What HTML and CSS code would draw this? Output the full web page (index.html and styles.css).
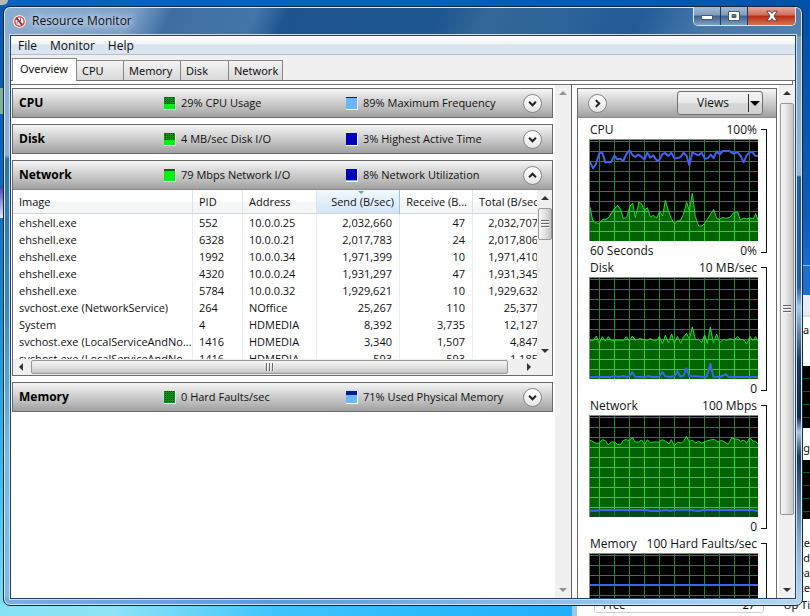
FILE: index.html
```html
<!DOCTYPE html>
<html lang="en">
<head>
<meta charset="utf-8">
<title>Resource Monitor</title>
<link rel="stylesheet" href="styles.css">
</head>
<body>
<svg class="defs" aria-hidden="true">
  <defs>
    <pattern id="grid" patternUnits="userSpaceOnUse" x="87" y="93" width="45" height="30">
      <rect width="45" height="30" fill="#000"/><path d="M0 1.5H45M1.5 0V30" stroke="#1c8a24" stroke-width="3"/>
    </pattern>
    <pattern id="grid-lit" patternUnits="userSpaceOnUse" x="87" y="93" width="45" height="30">
      <rect width="45" height="30" fill="#006400"/><path d="M0 1.5H45M1.5 0V30" stroke="#22d62e" stroke-width="3"/>
    </pattern>
  </defs>
</svg>
<div class="desktop">
  <div class="icon-bit bit-a"></div>
  <div class="icon-bit bit-b"></div>
  <div class="icon-bit bit-c"></div>
  <div class="back-window">
    <div class="back-title"></div>
    <div class="back-tabs">a</div>
    <div class="back-chart chart-a"></div>
    <div class="back-label">ag</div>
    <div class="back-chart chart-b"></div>
    <div class="back-stats"><span>te</span><span>d</span><span>ea</span><span>ce</span></div>
    <div class="back-foot"><span>Free</span><span>27</span></div>
    <div class="back-up">Up Ti</div>
  </div>

  <div class="window">
    <header class="titlebar">
      <svg class="app-icon" viewBox="0 0 16 16" aria-hidden="true">
        <circle cx="8" cy="8" r="7.3" fill="#f4f1f1" stroke="#a9a3a8"/>
        <circle cx="8" cy="8" r="4.9" fill="#fff" stroke="#c5383c" stroke-width="1.4"/>
        <path d="M4.5 4.2L10.8 11.6" stroke="#b01f24" stroke-width="2"/>
        <path d="M9 4.5v3M5.5 8v3" stroke="#555" stroke-width="1"/>
      </svg>
      <h1>Resource Monitor</h1>
      <div class="controls">
        <button type="button" aria-label="Minimize"><svg viewBox="0 0 14 12"><rect x="1.5" y="5.5" width="11" height="4" fill="#fff" stroke="#4a5a70"/></svg></button>
        <button type="button" aria-label="Maximize"><svg viewBox="0 0 14 12"><path d="M1.5 1.5h11v9h-11z M5 4.5v3h4v-3z" fill="#fff" fill-rule="evenodd" stroke="#4a5a70"/></svg></button>
        <button type="button" class="close" aria-label="Close"><svg viewBox="0 0 14 12"><path d="M1.8 1.2h3.4L7 3.5l1.8-2.3h3.4L9 6l3.2 4.8H8.8L7 8.5l-1.8 2.3H1.8L5 6z" fill="#fff" stroke="#5b3038" stroke-width=".9"/></svg></button>
      </div>
    </header>

    <div class="client">
      <nav class="menubar"><button type="button">File</button><button type="button">Monitor</button><button type="button">Help</button></nav>
      <div class="tabs" role="tablist">
        <button type="button" role="tab" aria-selected="true" class="tab tab-overview active">Overview</button>
        <button type="button" role="tab" class="tab tab-cpu">CPU</button>
        <button type="button" role="tab" class="tab tab-memory">Memory</button>
        <button type="button" role="tab" class="tab tab-disk">Disk</button>
        <button type="button" role="tab" class="tab tab-network">Network</button>
      </div>
      <div class="tab-edge"></div>

      <main class="panes">
        <div class="sections">
          <section class="section">
            <div class="bar">
              <h2>CPU</h2>
              <span class="stat"><i class="swatch green mid"></i>29% CPU Usage</span>
              <span class="stat"><i class="swatch sky"></i>89% Maximum Frequency</span>
              <button type="button" class="round" aria-label="Expand CPU"><svg viewBox="0 0 20 20"><path d="M6 8l4 4 4-4"/></svg></button>
            </div>
          </section>
          <section class="section">
            <div class="bar">
              <h2>Disk</h2>
              <span class="stat"><i class="swatch green mid"></i>4 MB/sec Disk I/O</span>
              <span class="stat"><i class="swatch navy"></i>3% Highest Active Time</span>
              <button type="button" class="round" aria-label="Expand Disk"><svg viewBox="0 0 20 20"><path d="M6 8l4 4 4-4"/></svg></button>
            </div>
          </section>
          <section class="section">
            <div class="bar">
              <h2>Network</h2>
              <span class="stat"><i class="swatch green high"></i>79 Mbps Network I/O</span>
              <span class="stat"><i class="swatch navy low"></i>8% Network Utilization</span>
              <button type="button" class="round" aria-label="Collapse Network"><svg viewBox="0 0 20 20"><path d="M6 12l4-4 4 4"/></svg></button>
            </div>
            <div class="list">
              <div class="viewport">
                <table>
                  <colgroup><col class="c-image"><col class="c-pid"><col class="c-address"><col class="c-send"><col class="c-receive"><col class="c-total"></colgroup>
                  <thead><tr><th>Image</th><th>PID</th><th>Address</th><th class="num sorted">Send (B/sec)</th><th class="num">Receive (B...</th><th class="total">Total (B/sec)</th></tr></thead>
                  <tbody>
                    <tr><td>ehshell.exe</td><td>552</td><td>10.0.0.25</td><td class="num">2,032,660</td><td class="num">47</td><td class="num">2,032,707</td></tr>
                    <tr><td>ehshell.exe</td><td>6328</td><td>10.0.0.21</td><td class="num">2,017,783</td><td class="num">24</td><td class="num">2,017,806</td></tr>
                    <tr><td>ehshell.exe</td><td>1992</td><td>10.0.0.34</td><td class="num">1,971,399</td><td class="num">10</td><td class="num">1,971,410</td></tr>
                    <tr><td>ehshell.exe</td><td>4320</td><td>10.0.0.24</td><td class="num">1,931,297</td><td class="num">47</td><td class="num">1,931,345</td></tr>
                    <tr><td>ehshell.exe</td><td>5784</td><td>10.0.0.32</td><td class="num">1,929,621</td><td class="num">10</td><td class="num">1,929,632</td></tr>
                    <tr><td>svchost.exe (NetworkService)</td><td>264</td><td>NOffice</td><td class="num">25,267</td><td class="num">110</td><td class="num">25,377</td></tr>
                    <tr><td>System</td><td>4</td><td>HDMEDIA</td><td class="num">8,392</td><td class="num">3,735</td><td class="num">12,127</td></tr>
                    <tr><td>svchost.exe (LocalServiceAndNo...</td><td>1416</td><td>HDMEDIA</td><td class="num">3,340</td><td class="num">1,507</td><td class="num">4,847</td></tr>
                    <tr><td>svchost.exe (LocalServiceAndNo...</td><td>1416</td><td>HDMEDIA</td><td class="num">593</td><td class="num">593</td><td class="num">1,185</td></tr>
                  </tbody>
                </table>
              </div>
              <div class="vscroll" aria-hidden="true"><i class="arrow up"></i><div class="thumb short"><i class="grip"></i></div><i class="arrow down"></i></div>
              <div class="hscroll" aria-hidden="true"><i class="arrow left"></i><div class="thumb"><i class="grip"></i></div><i class="arrow right"></i></div>
              <div class="corner"></div>
            </div>
          </section>
          <section class="section">
            <div class="bar">
              <h2>Memory</h2>
              <span class="stat"><i class="swatch green"></i>0 Hard Faults/sec</span>
              <span class="stat"><i class="swatch sky seventy"></i>71% Used Physical Memory</span>
              <button type="button" class="round" aria-label="Expand Memory"><svg viewBox="0 0 20 20"><path d="M6 8l4 4 4-4"/></svg></button>
            </div>
          </section>
        </div>
        <div class="vscroll gutter idle" aria-hidden="true"><i class="arrow up"></i><i class="arrow down"></i></div>

        <aside class="graphs">
          <div class="graph-panel">
            <div class="bar graph-bar">
              <button type="button" class="round" aria-label="Hide graphs"><svg viewBox="0 0 20 20"><path d="M8 6l4 4-4 4"/></svg></button>
              <button type="button" class="views"><span>Views</span><i class="arrow down"></i></button>
            </div>
            <figure class="graph">
              <figcaption><span>CPU</span><span>100%</span></figcaption>
              <svg class="plot" viewBox="60 60 504 303" aria-hidden="true">
                <rect x="60" y="60" width="504" height="303" fill="url(#grid)"/>
                <path class="area" d="M57 370V255L60 262 68 300 75 308 88 310 98 298 108 298 118 290 128 273 142 256 152 268 160 296 170 292 180 258 188 250 196 292 207 246 215 252 224 272 232 263 241 291 250 286 260 294 269 274 278 288 286 241 295 272 304 296 314 312 322 302 330 303 340 284 350 247 358 272 367 220 376 290 386 318 396 318 404 310 412 298 421 284 431 268 440 296 449 298 458 292 467 295 480 292 492 277 503 276 511 300 521 294 530 297 540 294 550 297 557 281 566 305V370Z"/>
                <path class="line" d="M58 123L62 130 69 145 78 132 88 99 97 99 106 127 123 127 133 106 142 118 151 116 160 123 169 102 178 91 187 104 195 111 205 104 214 110 223 119 232 98 241 113 250 106 260 121 268 120 277 102 286 99 295 108 304 98 313 115 322 115 332 111 341 98 350 108 358 136 367 97 376 102 386 106 395 98 404 116 413 115 422 104 431 114 440 94 449 104 458 93 478 93 490 101 503 97 512 108 521 127 530 106 540 97 548 97 556 108 566 107"/>
              </svg>
              <div class="foot"><span>60 Seconds</span><span>0%</span></div>
            </figure>
            <figure class="graph">
              <figcaption><span>Disk</span><span>10 MB/sec</span></figcaption>
              <svg class="plot" viewBox="60 60 504 303" aria-hidden="true">
                <rect x="60" y="60" width="504" height="303" fill="url(#grid)"/>
                <path class="area" d="M57 370V246L70 248 79 234 88 256 97 236 106 249 115 236 124 248 150 246 160 248 169 236 178 249 187 234 196 246 210 242 232 247 241 242 250 247 262 246 268 235 277 257 286 232 295 254 305 228 313 256 322 235 332 256 340 238 349 226 358 242 367 207 376 244 388 246 395 254 404 230 412 256 421 207 430 254 440 228 449 254 460 244 470 247 480 242 492 246 503 236 512 244 522 246 530 258 540 235 548 248 557 236 566 252V370Z"/>
                <path class="line" d="M57 357H122L134 354 145 357 160 354 170 357 179 355 187 342 195 356 225 357 235 354 245 357 268 357 277 342 286 355 300 357 314 355 322 339 331 356 341 353 349 331 358 354 375 355 410 357 421 318 430 356 450 357 467 349 476 357 566 357"/>
              </svg>
              <div class="foot"><span></span><span>0</span></div>
            </figure>
            <figure class="graph">
              <figcaption><span>Network</span><span>100 Mbps</span></figcaption>
              <svg class="plot" viewBox="60 60 504 303" aria-hidden="true">
                <rect x="60" y="60" width="504" height="303" fill="url(#grid)"/>
                <path class="area" d="M57 370V134L64 134 78 142 88 141 97 131 106 134 115 147 124 138 134 138 142 145 152 145 160 133 169 131 178 134 187 124 195 138 205 138 215 132 224 145 232 131 241 140 250 138 265 138 277 131 287 136 297 144 304 131 313 150 322 139 334 141 341 136 349 121 358 137 367 132 376 141 386 136 395 141 410 135 425 131 434 131 444 138 455 133 465 139 475 145 485 125 495 129 505 130 512 136 521 132 530 142 539 126 549 135 557 136 566 147V370Z"/>
                <rect class="haze" x="60" y="346" width="504" height="18"/>
                <path class="line" d="M57 344H80L90 342H230L240 344 265 345 285 342 300 344 320 341 355 341 385 345 400 342 545 342 566 345"/>
              </svg>
              <div class="foot"><span></span><span>0</span></div>
            </figure>
            <figure class="graph">
              <figcaption><span>Memory</span><span>100 Hard Faults/sec</span></figcaption>
              <svg class="plot" viewBox="60 60 504 303" aria-hidden="true">
                <rect x="60" y="60" width="504" height="303" fill="url(#grid)"/>
                <path class="line" d="M57 153H566"/>
              </svg>
              <div class="foot"><span></span><span>0</span></div>
            </figure>
          </div>
          <div class="vscroll gutter" aria-hidden="true"><i class="arrow up"></i><div class="thumb long"><i class="grip"></i></div><i class="arrow down"></i></div>
        </aside>
      </main>
    </div>
  </div>
</div>
</body>
</html>
```
FILE: styles.css
```css
* { box-sizing: border-box; }
body {
  margin: 0;
  font: 11px/16px "Noto Sans", "Open Sans", sans-serif;
  color: #111;
}
h1, h2, figure { margin: 0; font-size: inherit; font-weight: normal; }
button { font: inherit; color: inherit; padding: 0; margin: 0; border: 0; background: none; }
i { display: block; flex: none; }
.defs { position: absolute; width: 0; height: 0; }

/* Desktop */
.desktop {
  position: relative;
  display: flex;
  height: 100vh;
  padding: 6px 7px 10px 3px;
  overflow: hidden;
  background:
    linear-gradient(90deg, #86e2f5 0, #8fe3f6 14%, #3fc4fb 34%, #2bb8fb 55%, #129af5 100%) bottom / 100% 12px no-repeat,
    linear-gradient(90deg, #0b62bd, #0560bd 50%, #0151a8) top / 100% 7px no-repeat,
    linear-gradient(#0a55b0 0, #0c63c0 25%, #1a86d8 50%, #36b8ee 75%, #7fe0f5 100%) left / 50% 100% no-repeat,
    linear-gradient(#0151a8 0, #0d5cb8 35%, #1a78d6 48%);
}
.icon-bit { position: absolute; left: 0; width: 3px; background: #7fae9a; }
.bit-a { top: 0; width: 8px; height: 5px; border-radius: 0 0 6px 0; background: #b9b9ac; }
.bit-b { top: 88px; height: 26px; }
.bit-c { top: 186px; height: 32px; background: linear-gradient(#3a3ec0, #e8ecf5); }

.back-window {
  position: absolute;
  left: 572px;
  right: 0;
  top: 265px;
  bottom: 0;
  border-left: 5px solid #9fc6ea;
  background: #fff;
}
.back-window > div { position: absolute; }
.back-title { inset: 0 0 auto 0; height: 30px; background: #1b70cf; border-top: 1px solid #8fc2f0; }
.back-tabs { top: 30px; right: 0; width: 20px; height: 71px; padding: 27px 0 0 13px; background: linear-gradient(#e9eef5 20px, #b8c4d2 21px, #fff 22px); }
.back-chart { right: 0; width: 20px; background: repeating-linear-gradient(#000 0 12px, #0c5a20 12px 13px); }
.chart-a { top: 101px; height: 62px; }
.back-label { top: 175px; right: 0; width: 9px; display: flex; justify-content: flex-end; }
.chart-b { top: 195px; height: 59px; }
.back-stats { top: 270px; right: 0; display: grid; justify-items: end; line-height: 15px; }
.back-foot { left: 17px; bottom: 3px; width: 170px; height: 24px; padding: 7px 8px 0; display: flex; justify-content: space-between; border: 1px solid #d0d0d0; border-radius: 3px; }
.back-up { right: 0; bottom: 3px; white-space: nowrap; }

/* Window frame */
.window {
  position: relative;
  flex: 1;
  min-width: 0;
  display: flex;
  flex-direction: column;
  padding: 0 6px 6px;
  border: 1px solid #14263c;
  border-radius: 7px;
  box-shadow: inset 0 0 0 1px #d5e6f5;
  background:
    linear-gradient(90deg, #73b0e2, #5a9ddb 35%, #7db8e6 60%, #b5d6f0) bottom / 100% 8px no-repeat,
    linear-gradient(115deg, #8cadd2 0, #7c9fc8 120px, #3d6da3 155px, #4576ab 230px, #1e558f 260px, #1e568f 400px, #346799 440px, #2c6299 520px, #245a96 580px, #4577aa 640px, #5c86b2 800px) top / 100% 29px no-repeat,
    linear-gradient(#8fb0d5 0, #8cafd6 148px, #2f72ae 152px, #3c89bf 300px, #79bbe4 450px, #7db9e8) left / 50% 100% no-repeat,
    linear-gradient(#7299c2 0, #96b8dc 168px, #1f5c9c 170px, #235f9e 280px, #a5c9e8 300px, #1c3654 355px, #122c48 410px, #a8c8e4 425px, #1b3350 450px, #8eb5d6 540px, #b5d6f0);
}
.titlebar { display: flex; align-items: center; height: 28px; padding-left: 2px; flex: none; }
.app-icon { width: 15px; height: 15px; }
.titlebar h1 {
  flex: 1;
  margin-left: 5px;
  font-family: "Open Sans", "Noto Sans", sans-serif;
  font-size: 12px;
  text-shadow: 0 0 6px #d5e3f3, 0 0 8px #d5e3f3, 0 0 12px #c5d8ee;
}
.controls {
  display: flex;
  align-self: flex-start;
  height: 19px;
  border: 1px solid #dce8f4;
  border-top: 0;
  border-radius: 0 0 5px 5px;
  overflow: hidden;
}
.controls button {
  width: 27px;
  display: grid;
  place-items: center;
  border-right: 1px solid #1f3c5e;
  background: linear-gradient(#a6bcd4 0, #7f9cbf 45%, #3c618d 50%, #7c9fc4 100%);
}
.controls button.close {
  width: 47px;
  border: 0;
  background: linear-gradient(#e3a89c 0, #cf6d5c 45%, #b52d17 50%, #d9744c 100%);
}
.controls svg { width: 14px; height: 12px; }
.client {
  flex: 1;
  min-height: 0;
  display: flex;
  flex-direction: column;
  border: 1px solid #1c4066;
  outline: 1px solid #c9dff2;
  background: #fff;
}

/* Menu and tabs */
.menubar {
  display: flex;
  flex: none;
  gap: 13px;
  height: 19px;
  padding: 2px 0 0 7px;
  font-family: "Open Sans", "Noto Sans", sans-serif;
  font-size: 12px;
  border-bottom: 1px solid #b5bccb;
  background: linear-gradient(#fff 0, #f4f6fa 40%, #d9e3ee 50%, #dce6f0 100%);
}
.tabs {
  display: flex;
  align-items: flex-end;
  flex: none;
  height: 26px;
  padding-left: 1px;
  background: linear-gradient(#6f6f6f, #6f6f6f) bottom / 100% 1px no-repeat #f0f0f0;
}
.tab {
  height: 21px;
  padding-left: 5px;
  text-align: left;
  border: 1px solid #82868b;
  border-left-width: 0;
  border-bottom-color: #6f6f6f;
  background: linear-gradient(#f4f4f4, #e6e6e6 50%, #d9d9d9);
}
.tab.active { height: 23px; padding: 0 0 2px 7px; border-left-width: 1px; border-bottom: 0; background: #fff; }
.tab-overview { width: 65px; }
.tab-cpu { width: 47px; }
.tab-memory { width: 57px; }
.tab-disk { width: 48px; }
.tab-network { width: 54px; }
.tab-edge { flex: none; height: 4px; margin-right: 2px; border: solid #6f6f6f; border-width: 0 1px 1px 0; }

/* Sections */
.panes { flex: 1; min-height: 0; display: flex; }
.sections {
  flex: 1;
  min-width: 0;
  display: flex;
  flex-direction: column;
  gap: 6px;
  padding: 3px 2px 0 1px;
  font-family: "Open Sans", "Noto Sans", sans-serif;
}
.section { border: 1px solid #6a6a6a; }
.bar {
  display: grid;
  grid-template-columns: 151px 182px 1fr 19px;
  align-items: center;
  height: 28px;
  padding-right: 10px;
  background: linear-gradient(#f6f6f6 0, #e0e0e0 25%, #c4c4c4 60%, #a0a0a0 100%);
}
.bar h2 { padding-left: 6px; font-size: 12px; font-weight: bold; color: #000; }
.stat { display: flex; align-items: center; gap: 5px; white-space: nowrap; }
.swatch { width: 12px; height: 13px; border: solid #eefbee; border-width: 0 1px 1px 0; }
.swatch.green { background: conic-gradient(#0a4a0e 25%, #148c18 0) 0 0 / 2px 2px; }
.swatch.mid { background: linear-gradient(transparent 60%, #00f01e 60%), conic-gradient(#0a4a0e 25%, #148c18 0) 0 0 / 2px 2px; }
.swatch.high { background: linear-gradient(#0c6a10 20%, #00f01e 20%); }
.swatch.sky { background: linear-gradient(#001a9c 12%, #6cb6ff 12%); }
.swatch.seventy { background: linear-gradient(#001a9c 32%, #6cb6ff 32%); }
.swatch.navy { background: #0000b8; }
.swatch.low { background: linear-gradient(#0000b8 88%, #6cb6ff 88%); }
.round {
  width: 19px;
  height: 19px;
  border: 1px solid #858585;
  border-radius: 50%;
  background: linear-gradient(#fff, #e6e6e6);
}
.round svg { display: block; width: 17px; height: 17px; fill: none; stroke: #222; stroke-width: 2.4; }

/* Process list */
.list { display: grid; grid-template-columns: minmax(0, 1fr) 15px; grid-template-rows: 169px 16px; border-top: 1px solid #8a8a8a; }
.viewport { overflow: hidden; }
.corner { background: #f0f0f0; }
table { width: 533px; table-layout: fixed; border-collapse: separate; border-spacing: 0; }
.c-image { width: 180px; }
.c-pid { width: 50px; }
.c-address { width: 74px; }
.c-send { width: 83px; }
.c-receive { width: 73px; }
.c-total { width: 73px; }
th, td { padding: 0 0 0 6px; text-align: left; font-weight: normal; white-space: nowrap; overflow: hidden; border-right: 1px solid #e6edf5; }
th { height: 24px; border-bottom: 1px solid #d5d5d5; border-right-color: #dfe3ea; background: linear-gradient(#fff 50%, #f5f6f8 50%); }
td { height: 17px; line-height: 17px; }
th.num { padding-right: 5px; text-align: right; }
td.num { padding-right: 7px; text-align: right; }
th.sorted {
  position: relative;
  border-right-color: #96c3e6;
  background: linear-gradient(#f2f8fe 0, #e3effb 50%, #d2e5f8 100%);
}
th.sorted::before { content: ""; position: absolute; left: 50%; top: 1px; border: solid transparent; border-width: 3px 3px 0; border-top-color: #6c9cba; }

/* Scroll bars */
.vscroll, .hscroll { display: flex; align-items: center; background: #f0f0f0; }
.vscroll { flex-direction: column; padding: 6px 0; }
.hscroll { padding: 0 6px; }
.arrow { width: 0; height: 0; border: solid transparent; }
.arrow.up { border-width: 0 4px 4px; border-bottom-color: #333; }
.arrow.down { border-width: 4px 4px 0; border-top-color: #333; }
.arrow.left { border-width: 4px 4px 4px 0; border-right-color: #333; }
.arrow.right { border-width: 4px 0 4px 4px; border-left-color: #333; }
.vscroll .arrow.down { margin-top: auto; }
.idle .arrow { opacity: .5; }
.thumb { display: grid; place-items: center; border: 1px solid #979797; border-radius: 2px; }
.vscroll .thumb { width: 14px; margin-top: 8px; background: linear-gradient(90deg, #f6f6f6, #e4e4e4 45%, #c4c4c4); }
.thumb.short { height: 32px; }
.thumb.long { flex: 0 1 412px; }
.hscroll .thumb { flex: 1; height: 14px; margin: 0 19px 0 8px; background: linear-gradient(#f6f6f6, #e4e4e4 45%, #c4c4c4); }
.grip { width: 8px; height: 8px; }
.vscroll .grip { background: repeating-linear-gradient(#666 0 1px, #f4f4f4 1px 2px, transparent 2px 3px); }
.hscroll .grip { background: repeating-linear-gradient(90deg, #666 0 1px, #f4f4f4 1px 2px, transparent 2px 3px); }
.gutter { flex: none; width: 16px; }

/* Graph column */
.graphs {
  flex: none;
  display: flex;
  gap: 2px;
  width: 224px;
  padding-left: 5px;
  border-left: 1px solid #5f5f5f;
  font-family: "Open Sans", "Noto Sans", sans-serif;
  font-size: 12px;
  overflow: hidden;
}
.graph-panel { flex: 1; min-width: 0; margin-top: 3px; border: solid #6a6a6a; border-width: 1px 1px 0; overflow: hidden; }
.graph-bar { display: flex; justify-content: space-between; height: 29px; margin-bottom: 4px; padding: 0 13px 0 10px; border-bottom: 1px solid #8a8a8a; }
.views {
  display: flex;
  align-items: center;
  width: 86px;
  height: 24px;
  padding-right: 2px;
  border: 1px solid #707070;
  border-radius: 3px;
  background: linear-gradient(#f4f4f4, #e8e8e8 48%, #d8d8d8 50%, #d0d0d0);
}
.views span { flex: 1; line-height: 18px; border-right: 1px solid #333; }
.views .arrow { margin-left: 1px; border-width: 5px 5px 0; border-top-color: #000; }
.graph { position: relative; width: 178px; margin: 0 0 1px 11px; padding-right: 9px; }
.graph::after { content: ""; position: absolute; right: 0; top: 7px; bottom: 6px; width: 5px; border: solid #111; border-width: 1px 1px 1px 0; }
.graph figcaption, .foot { display: flex; justify-content: space-between; height: 17px; padding: 0 1px; white-space: nowrap; }
.foot { height: 18px; padding-top: 2px; }
.plot { display: block; width: 169px; height: 102px; border: solid #8a8a8a; border-width: 1px 0 0 1px; background: #000; }
.area { fill: url(#grid-lit); stroke: #1fe02c; stroke-width: 3; }
.line { fill: none; stroke: #3d63f0; stroke-width: 6; stroke-linejoin: round; }
.haze { fill: #0b3b2c; opacity: .6; }
```
